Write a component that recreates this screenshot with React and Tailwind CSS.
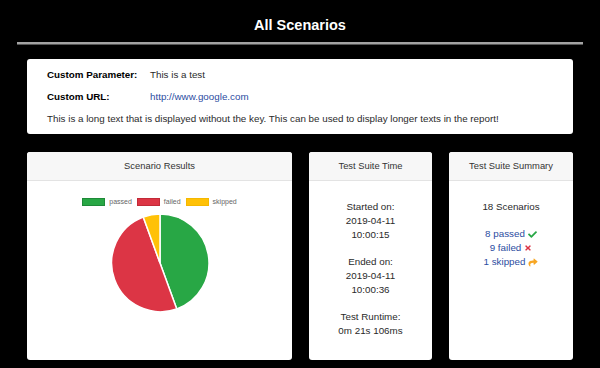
import { FaCheck, FaTimes, FaShare } from 'react-icons/fa';

const font = { fontFamily: '"Liberation Sans", Arial, sans-serif' };

const CardHeader = ({ title }) => (
  <div className="flex h-[29px] items-center justify-center rounded-t-[3px] border-b border-[#e3e3e3] bg-[#f7f7f7] text-[9.4px] text-[#333]">
    {title}
  </div>
);

const LegendItem = ({ color, label }) => (
  <div className="flex items-center gap-[4px]">
    <span className={`block h-[8px] w-[23px] border ${color}`}></span>
    <span className="text-[7px] leading-[10px] text-[#666]">{label}</span>
  </div>
);

const Pie = () => (
  <svg width="100" height="100" viewBox="0 0 100 100" className="mx-auto block">
    <path d="M50 50 L50 1 A49 49 0 0 1 66.76 96.04 Z" fill="#28a745" stroke="#fff" strokeWidth="1.5" />
    <path d="M50 50 L66.76 96.04 A49 49 0 0 1 33.24 3.96 Z" fill="#dc3545" stroke="#fff" strokeWidth="1.5" />
    <path d="M50 50 L33.24 3.96 A49 49 0 0 1 50 1 Z" fill="#ffc107" stroke="#fff" strokeWidth="1.5" />
  </svg>
);

const App = () => {
  return (
    <div className="min-h-[368px] w-full bg-black pt-[15px]" style={font}>
      <h1 className="text-center text-[14.5px] font-bold leading-[20px] text-white">All Scenarios</h1>

      <div className="mx-[17px] mt-[7px] h-[3px] border-b border-[#555] bg-[#a3a3a3]"></div>

      <div className="mx-[27px] mt-[14px] h-[75px] rounded-[3px] bg-white px-[20px] pt-[5px] text-[9.8px] text-[#2a2a2a]">
        <div className="flex h-[22px] items-center">
          <span className="w-[103px] font-bold text-black">Custom Parameter:</span>
          <span>This is a test</span>
        </div>
        <div className="flex h-[22px] items-center">
          <span className="w-[103px] font-bold text-black">Custom URL:</span>
          <a href="#" className="text-[#2b4c9f]">http://www.google.com</a>
        </div>
        <div className="flex h-[22px] items-center">
          This is a long text that is displayed without the key. This can be used to display longer texts in the report!
        </div>
      </div>

      <div className="mx-[27px] mt-[18px] grid grid-cols-[265px_123px_124px] gap-[17px]">
        <div className="h-[208px] rounded-[3px] bg-white">
          <CardHeader title="Scenario Results" />
          <div className="flex justify-center gap-[5px] pt-[16px]">
            <LegendItem color="bg-[#28a745] border-[#1e8a38]" label="passed" />
            <LegendItem color="bg-[#dc3545] border-[#c22a38]" label="failed" />
            <LegendItem color="bg-[#ffc107] border-[#f5b800]" label="skipped" />
          </div>
          <div className="pt-[6px]">
            <Pie />
          </div>
        </div>

        <div className="h-[208px] rounded-[3px] bg-white">
          <CardHeader title="Test Suite Time" />
          <div className="flex flex-col gap-[13px] pt-[19px] text-center text-[9.8px] leading-[14px] text-[#2a2a2a]">
            <div>
              <div>Started on:</div>
              <div>2019-04-11</div>
              <div>10:00:15</div>
            </div>
            <div>
              <div>Ended on:</div>
              <div>2019-04-11</div>
              <div>10:00:36</div>
            </div>
            <div>
              <div>Test Runtime:</div>
              <div>0m 21s 106ms</div>
            </div>
          </div>
        </div>

        <div className="h-[208px] rounded-[3px] bg-white">
          <CardHeader title="Test Suite Summary" />
          <div className="flex flex-col gap-[13px] pt-[19px] text-center text-[9.8px] leading-[14px] text-[#2a2a2a]">
            <div>18 Scenarios</div>
            <div className="text-[#2b4c9f]">
              <div className="flex items-center justify-center gap-[3px]">
                8 passed <FaCheck className="h-[9px] w-[9px] text-[#28a745]" />
              </div>
              <div className="flex items-center justify-center gap-[3px]">
                9 failed <FaTimes className="h-[8px] w-[8px] text-[#dc3545]" />
              </div>
              <div className="flex items-center justify-center gap-[3px]">
                1 skipped <FaShare className="h-[9px] w-[10px] text-[#f7a623]" />
              </div>
            </div>
          </div>
        </div>
      </div>
    </div>
  );
};

export default App;
